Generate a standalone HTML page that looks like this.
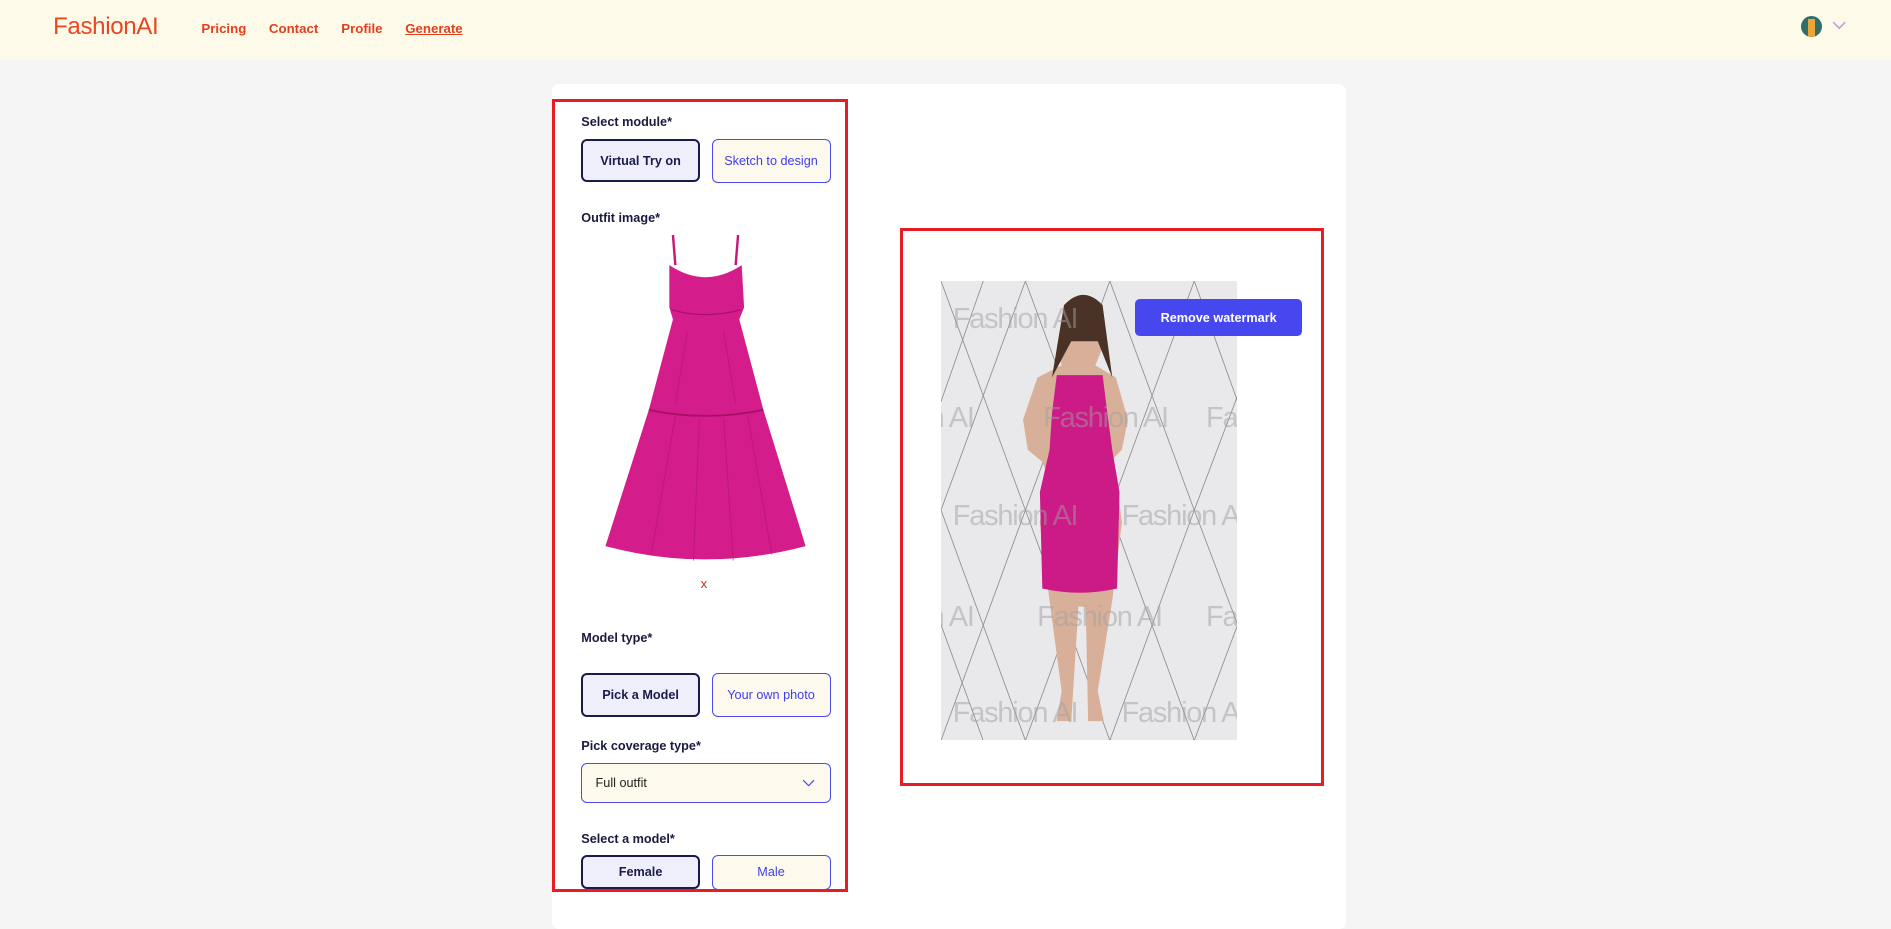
<!DOCTYPE html>
<html><head><meta charset="utf-8"><style>
html,body{margin:0;padding:0}
body{width:1568px;height:743px;zoom:1.20599;background:#f5f5f5;font-family:"Liberation Sans",sans-serif;position:relative;overflow:hidden}
.hdr{position:absolute;left:0;top:0;width:1568px;height:50px;background:#fefaea}
.logo{position:absolute;left:44px;top:11px;font-size:20px;color:#e8471f;letter-spacing:-.3px}
.nav{position:absolute;top:17px;font-size:11px;font-weight:bold;color:#e0401c}
.card{position:absolute;left:458px;top:70px;width:658px;height:700px;background:#fff;border-radius:6px}
.lbox{position:absolute;left:458px;top:82px;width:240px;height:653px;border:3px solid #e81c24}
.rbox{position:absolute;left:746px;top:189px;width:347px;height:458px;border:3px solid #e81c24}
.lab{position:absolute;left:482px;font-size:10.5px;font-weight:bold;color:#1a1a40}
.b1{position:absolute;left:482px;width:95px;height:33px;border:2px solid #1b1b4b;border-radius:5px;background:#eeeffb;font-size:10.5px;font-weight:bold;color:#1b1b4b;display:flex;align-items:center;justify-content:center}
.b2{position:absolute;left:590px;width:97px;height:35px;border:1px solid #4a4af0;border-radius:5px;background:#fdf9ec;font-size:10.5px;color:#3e3ee8;display:flex;align-items:center;justify-content:center}
.wm{position:absolute;font-size:24px;color:rgba(160,160,160,.5);font-family:"Liberation Sans",sans-serif;white-space:nowrap;letter-spacing:-1px}
</style></head><body>
<div class="hdr">
<div class="logo">FashionAI</div>
<div class="nav" style="left:167px">Pricing</div>
<div class="nav" style="left:223px">Contact</div>
<div class="nav" style="left:283px">Profile</div>
<div class="nav" style="left:336px;text-decoration:underline">Generate</div>
<div style="position:absolute;left:1493px;top:13px;width:18px;height:18px;border-radius:50%;background:#2f6f6a;overflow:hidden"><div style="position:absolute;left:6px;top:3px;width:6px;height:15px;background:#e9a43a"></div></div>
<svg style="position:absolute;left:1519px;top:17px" width="12" height="8"><path d="M1 1L6 6L11 1" stroke="#c79bd4" fill="none" stroke-width="1.3"/></svg>
</div>
<div class="card"></div>
<div class="lbox"></div>
<div class="rbox"></div>
<div class="lab" style="top:95px">Select module*</div>
<div class="b1" style="top:115px">Virtual Try on</div>
<div class="b2" style="top:115px">Sketch to design</div>
<div class="lab" style="top:175px">Outfit image*</div>
<svg style="position:absolute;left:500px;top:195px" width="170" height="275" viewBox="0 0 170 275">
<path d="M58 0L60 25M112 0L110 25" stroke="#c8157a" stroke-width="2"/>
<path d="M55 25Q85 45 115 25L117 60L113 70L133 145L168 258Q85 280 2 258L38 145L58 70L55 60Z" fill="#d41c8a"/>
<path d="M38 145Q85 155 133 145" stroke="#a81068" fill="none" stroke-width="1.5"/>
<path d="M57 62Q85 70 114 62" stroke="#a81068" fill="none"/>
<g stroke="#b01470" stroke-width=".8" opacity=".6"><path d="M60 150L40 265M80 152L75 270M100 152L108 270M120 150L140 265M70 80L60 140M100 80L110 140"/></g>
</svg>
<div style="position:absolute;left:581px;top:478px;font-size:11px;color:#c0301c">x</div>
<div class="lab" style="top:523px">Model type*</div>
<div class="b1" style="top:558px">Pick a Model</div>
<div class="b2" style="top:558px">Your own photo</div>
<div class="lab" style="top:613px">Pick coverage type*</div>
<div style="position:absolute;left:482px;top:633px;width:205px;height:31px;border:1px solid #4a4af0;border-radius:5px;background:#fdf9ec;font-size:10.5px;color:#222">
<span style="position:absolute;left:11px;top:10px">Full outfit</span>
<svg style="position:absolute;right:12px;top:12px" width="11" height="7"><path d="M1 1L5.5 5.5L10 1" stroke="#4a4af0" fill="none"/></svg></div>
<div class="lab" style="top:690px">Select a model*</div>
<div class="b1" style="top:709px;height:25px">Female</div>
<div class="b2" style="top:709px;height:27px">Male</div>
<div style="position:absolute;left:780px;top:233px;width:246px;height:381px;background:#e9e9ec;overflow:hidden">
<svg width="246" height="381" style="position:absolute;left:0;top:0">
<g stroke="#777" stroke-width=".7" fill="none" opacity=".8">
<path d="M0 0L70 190L0 381M70 0L140 190L70 381M140 0L210 190L140 381M210 0L246 100M0 190L70 0M70 190L140 0M140 190L210 0M210 190L246 95M0 190L70 381M70 190L140 381M140 190L210 381M210 190L246 285M210 381L246 285M0 100L35 0M35 381L0 285"/>
</g>
<path d="M102 20Q118 6 132 20L134 55L128 70L145 80L155 115L150 140L140 150L145 160L150 200L142 265L130 340L135 365L122 365L120 270L114 270L108 365L96 365L100 340L90 265L82 200L88 160L84 150L72 140L68 115L80 80L100 70L96 55Z" fill="#d8b09a"/>
<path d="M102 20Q118 3 134 20L142 80L130 50L108 50L92 80Z" fill="#4a3326"/>
<path d="M96 78L134 78L138 110L142 140L148 175L146 255Q115 262 84 255L82 175L90 140L92 110Z" fill="#cc1a86"/>
</svg>
<div class="wm" style="left:10px;top:18px">Fashion AI</div>
<div class="wm" style="left:160px;top:18px">Fa</div>
<div class="wm" style="left:-10px;top:100px">n AI</div>
<div class="wm" style="left:85px;top:100px">Fashion AI</div>
<div class="wm" style="left:220px;top:100px">Fas</div>
<div class="wm" style="left:10px;top:182px">Fashion AI</div>
<div class="wm" style="left:150px;top:182px">Fashion AI</div>
<div class="wm" style="left:-10px;top:265px">n AI</div>
<div class="wm" style="left:80px;top:265px">Fashion AI</div>
<div class="wm" style="left:220px;top:265px">Fas</div>
<div class="wm" style="left:10px;top:345px">Fashion AI</div>
<div class="wm" style="left:150px;top:345px">Fashion AI</div>
</div>
<div style="position:absolute;left:941px;top:248px;width:139px;height:31px;background:#4747f0;border-radius:4px;color:#fff;font-size:10.5px;font-weight:bold;display:flex;align-items:center;justify-content:center">Remove watermark</div>
</body></html>
